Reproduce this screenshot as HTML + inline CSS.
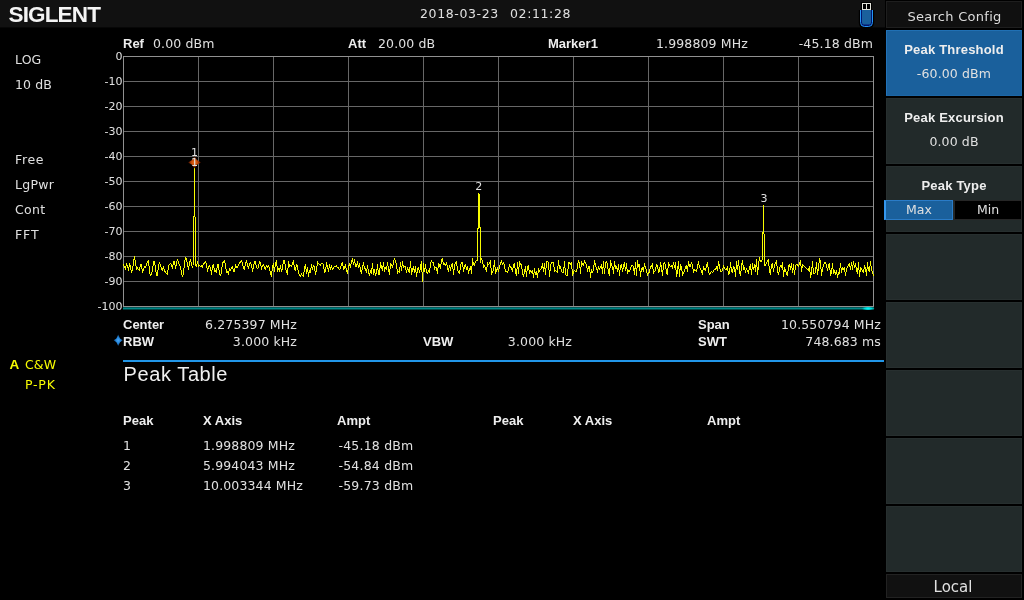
<!DOCTYPE html>
<html lang="en"><head><meta charset="utf-8"><title>SIGLENT Spectrum Analyzer - Peak Table</title>
<style>
html,body{margin:0;padding:0;background:#000;}
body{width:1024px;height:600px;position:relative;overflow:hidden;color:#e0e0e0;will-change:transform;
 font-family:"DejaVu Sans","Liberation Sans",sans-serif;font-size:12.5px;}
.t{position:absolute;white-space:nowrap;line-height:20px;height:20px;margin-top:-14px;}
.n{font-family:"DejaVu Sans","Liberation Sans",sans-serif;font-size:12.5px;font-weight:normal;letter-spacing:0.13px;}
.dt{letter-spacing:0.62px;}
.s{font-family:"DejaVu Sans","Liberation Sans",sans-serif;font-size:11px;}
.b{font-family:"Liberation Sans",sans-serif;font-size:13px;font-weight:bold;color:#eee;}
.y{color:#f8fc00;}
#hdr{position:absolute;left:0;top:0;width:885px;height:27px;background:#111;border-bottom:1px solid #070707;}
#logo{position:absolute;left:8.5px;top:1px;height:28px;line-height:28px;font-family:"Liberation Sans",sans-serif;
 font-weight:bold;font-size:22.5px;color:#f4f4f4;letter-spacing:-0.85px;}
#chart{position:absolute;left:0;top:0;}
#menu{position:absolute;left:886px;top:0;width:136px;height:600px;}
#menu .title{position:absolute;left:0;top:1px;width:134px;height:25px;border:1px solid #1e1e1e;background:#101010;
 text-align:center;line-height:29px;font-size:13px;letter-spacing:0.28px;text-indent:1px;color:#dcdcdc;}
#menu .k{position:absolute;left:0;width:136px;height:66px;background:#222a2a;box-sizing:border-box;border:1px solid #272f2f;text-align:center;}
#menu .k.sel{background:#1a609c;border:1px solid #1c66a6;border-left:1px solid #2272b8;border-top:1px solid #2070b4;}
#menu .k .l{position:absolute;left:-1px;width:136px;top:9px;letter-spacing:0.2px;line-height:20px;font-family:"Liberation Sans",sans-serif;font-weight:bold;font-size:13px;color:#eee;}
#menu .k .v{position:absolute;left:-1px;width:136px;top:33px;line-height:20px;font-size:12.5px;letter-spacing:0.13px;}
#menu .local{position:absolute;left:0;top:574px;width:134px;height:22px;border:1px solid #222;background:#111;text-align:center;line-height:24px;font-size:15px;color:#e0e0e0;text-indent:-2px;}
#max{position:absolute;left:-3px;top:33px;width:69px;height:20px;box-sizing:border-box;background:#1a609c;border:1px solid #2a7cc8;border-left:2px solid #3498f0;line-height:18px;font-size:12.5px;}
#min{position:absolute;left:67px;top:33px;width:68px;height:20px;box-sizing:border-box;background:#000;border:1px solid #262626;line-height:18px;font-size:12.5px;}
#ptitle{position:absolute;left:123.5px;letter-spacing:0.6px;top:361px;font-family:"Liberation Sans",sans-serif;font-size:20px;line-height:26px;color:#f0f0f0;}
table#pk{position:absolute;left:123px;top:410px;border-collapse:collapse;table-layout:fixed;width:740px;}
#pk th{font-family:"Liberation Sans",sans-serif;font-weight:bold;font-size:13px;text-align:left;padding:0;height:26px;line-height:22px;color:#eee;vertical-align:top;}
#pk td{padding:0;height:20px;line-height:20px;font-size:12.5px;letter-spacing:0.13px;}
#pk td.a{padding-left:1.5px;letter-spacing:0.2px;}
</style></head><body>
<div id="hdr"><div id="logo">SIGLENT</div></div>
<svg id="chart" width="1024" height="600" viewBox="0 0 1024 600" shape-rendering="crispEdges">
 <defs>
  <radialGradient id="mg" cx="50%" cy="50%" r="50%"><stop offset="0" stop-color="#f07018"/><stop offset="0.5" stop-color="#c04808"/><stop offset="1" stop-color="#300800"/></radialGradient>
  <radialGradient id="bg" cx="50%" cy="50%" r="50%"><stop offset="0" stop-color="#48a8f8"/><stop offset="0.5" stop-color="#2484d8"/><stop offset="1" stop-color="#0c3c6c"/></radialGradient>
  <radialGradient id="cg" cx="50%" cy="50%" r="50%"><stop offset="0" stop-color="#00ffff"/><stop offset="0.5" stop-color="#00e0e0" stop-opacity="0.9"/><stop offset="1" stop-color="#00a0a0" stop-opacity="0"/></radialGradient>
 </defs>
 <path d="M198.5 56V307M123 81.5H874M273.5 56V307M123 106.5H874M348.5 56V307M123 131.5H874M423.5 56V307M123 156.5H874M498.5 56V307M123 181.5H874M573.5 56V307M123 206.5H874M648.5 56V307M123 231.5H874M723.5 56V307M123 256.5H874M798.5 56V307M123 281.5H874" stroke="#676767" stroke-width="1" fill="none"/>
 <rect x="123.5" y="56.5" width="750" height="250" fill="none" stroke="#909090" stroke-width="1"/>
 <rect x="123" y="307" width="751" height="1" fill="#005858"/>
 <rect x="123" y="308" width="751" height="1" fill="#008888"/>
 <rect x="123" y="309" width="751" height="1" fill="#004444"/>
 <ellipse cx="868" cy="308.5" rx="7" ry="2" fill="url(#cg)" shape-rendering="auto"/>
 <path d="M123.5 264V266M124.5 266V268M125.5 266V270M126.5 263V266M127.5 265V268M128.5 267V271M129.5 263V267M130.5 265V270M131.5 270V273M132.5 266V271M133.5 259V266M134.5 256V260M135.5 260V266M136.5 266V270M137.5 267V269M138.5 269V270M139.5 267V271M140.5 264V267M141.5 264V269M142.5 269V273M143.5 268V271M144.5 266V268M145.5 266V268M146.5 263V266M147.5 261V263M148.5 260V266M149.5 266V274M150.5 274V276M151.5 272V275M152.5 266V272M153.5 261V266M154.5 261V265M155.5 265V272M156.5 272V276M157.5 270V276M158.5 264V270M159.5 262V264M160.5 264V267M161.5 267V270M162.5 268V271M163.5 266V269M164.5 269V272M165.5 271V273M166.5 273V274M167.5 270V275M168.5 265V270M169.5 264V265M170.5 263V264M171.5 264V267M172.5 265V269M173.5 261V265M174.5 261V265M175.5 265V269M176.5 261V266M177.5 259V261M178.5 261V264M179.5 264V266M180.5 266V270M181.5 270V275M182.5 275V277M183.5 268V275M184.5 260V268M185.5 257V260M186.5 258V262M187.5 262V267M188.5 266V270M189.5 261V266M190.5 259V262M191.5 262V266M192.5 266V268M193.5 216V265M194.5 168V217M195.5 217V266M196.5 264V267M197.5 261V264M198.5 264V267M199.5 265V266M200.5 266V267M201.5 265V267M202.5 265V268M203.5 263V265M204.5 262V264M205.5 261V263M206.5 263V268M207.5 268V272M208.5 266V269M209.5 265V267M210.5 267V271M211.5 270V275M212.5 265V270M213.5 264V268M214.5 268V272M215.5 270V272M216.5 268V273M217.5 264V268M218.5 264V270M219.5 270V275M220.5 274V276M221.5 267V274M222.5 262V267M223.5 261V263M224.5 260V263M225.5 263V269M226.5 269V273M227.5 271V273M228.5 271V275M229.5 268V271M230.5 269V271M231.5 267V269M232.5 266V269M233.5 269V272M234.5 268V272M235.5 264V268M236.5 266V268M237.5 266V268M238.5 264V266M239.5 262V264M240.5 261V263M241.5 260V262M242.5 262V266M243.5 266V269M244.5 266V270M245.5 262V266M246.5 260V263M247.5 263V267M248.5 266V269M249.5 263V266M250.5 262V264M251.5 264V268M252.5 268V272M253.5 264V269M254.5 261V264M255.5 261V265M256.5 265V268M257.5 268V269M258.5 264V268M259.5 261V264M260.5 262V266M261.5 266V270M262.5 265V267M263.5 264V266M264.5 266V269M265.5 267V270M266.5 265V267M267.5 266V268M268.5 265V267M269.5 267V271M270.5 271V275M271.5 271V277M272.5 265V271M273.5 263V268M274.5 267V272M275.5 262V267M276.5 260V266M277.5 266V272M278.5 268V270M279.5 268V272M280.5 265V269M281.5 269V272M282.5 264V270M283.5 260V264M284.5 260V264M285.5 264V270M286.5 270V273M287.5 268V275M288.5 261V268M289.5 264V267M290.5 265V266M291.5 265V267M292.5 262V265M293.5 260V265M294.5 265V270M295.5 267V271M296.5 264V267M297.5 265V270M298.5 270V274M299.5 274V276M300.5 275V277M301.5 273V275M302.5 275V276M303.5 272V277M304.5 266V272M305.5 264V269M306.5 269V274M307.5 267V272M308.5 272V277M309.5 270V273M310.5 268V273M311.5 264V268M312.5 267V270M313.5 265V267M314.5 266V271M315.5 271V275M316.5 266V272M317.5 261V266M318.5 263V264M319.5 264V265M320.5 264V266M321.5 263V264M322.5 263V264M323.5 264V269M324.5 269V273M325.5 267V272M326.5 262V267M327.5 265V269M328.5 268V272M329.5 264V268M330.5 267V270M331.5 265V268M332.5 268V270M333.5 267V269M334.5 266V267M335.5 266V267M336.5 265V267M337.5 267V268M338.5 267V269M339.5 269V270M340.5 266V269M341.5 263V266M342.5 262V266M343.5 266V270M344.5 266V269M345.5 264V268M346.5 268V272M347.5 270V274M348.5 265V270M349.5 263V266M350.5 264V268M351.5 260V264M352.5 258V262M353.5 262V265M354.5 259V263M355.5 263V267M356.5 264V267M357.5 261V265M358.5 265V268M359.5 263V267M360.5 267V272M361.5 270V274M362.5 265V270M363.5 262V266M364.5 266V269M365.5 268V271M366.5 269V273M367.5 265V269M368.5 269V274M369.5 273V276M370.5 270V273M371.5 268V274M372.5 263V269M373.5 269V275M374.5 269V273M375.5 273V276M376.5 269V274M377.5 264V270M378.5 270V275M379.5 268V275M380.5 262V268M381.5 265V269M382.5 266V271M383.5 262V267M384.5 267V272M385.5 267V269M386.5 266V270M387.5 262V266M388.5 266V272M389.5 269V275M390.5 263V269M391.5 264V266M392.5 265V268M393.5 260V265M394.5 258V260M395.5 260V263M396.5 263V269M397.5 269V274M398.5 271V272M399.5 267V273M400.5 262V267M401.5 266V271M402.5 261V266M403.5 265V268M404.5 266V267M405.5 266V270M406.5 270V273M407.5 267V270M408.5 269V272M409.5 267V273M410.5 261V268M411.5 268V275M412.5 268V272M413.5 266V270M414.5 269V273M415.5 266V272M416.5 272V277M417.5 268V273M418.5 267V270M419.5 270V273M420.5 264V270M421.5 261V272M422.5 272V282M423.5 263V272M424.5 268V272M425.5 264V269M426.5 269V273M427.5 272V274M428.5 270V272M429.5 268V273M430.5 262V268M431.5 260V262M432.5 262V263M433.5 262V266M434.5 266V270M435.5 267V268M436.5 267V271M437.5 268V274M438.5 263V268M439.5 264V267M440.5 264V269M441.5 259V264M442.5 258V262M443.5 262V265M444.5 263V265M445.5 264V266M446.5 262V265M447.5 265V270M448.5 268V272M449.5 265V268M450.5 267V271M451.5 264V267M452.5 263V269M453.5 269V275M454.5 264V270M455.5 262V264M456.5 261V266M457.5 266V271M458.5 271V273M459.5 270V274M460.5 264V270M461.5 262V264M462.5 262V267M463.5 267V272M464.5 265V269M465.5 264V267M466.5 267V270M467.5 266V270M468.5 270V274M469.5 268V271M470.5 266V270M471.5 266V274M472.5 258V266M473.5 262V265M474.5 263V266M475.5 261V263M476.5 260V261M477.5 228V261M478.5 193V229M479.5 194V228M480.5 227V263M481.5 258V260M482.5 260V264M483.5 264V268M484.5 265V267M485.5 267V270M486.5 267V272M487.5 262V267M488.5 264V265M489.5 262V264M490.5 260V268M491.5 268V275M492.5 271V273M493.5 265V271M494.5 260V267M495.5 267V274M496.5 269V272M497.5 267V270M498.5 269V272M499.5 265V269M500.5 262V265M501.5 260V263M502.5 263V265M503.5 262V264M504.5 264V269M505.5 269V272M506.5 271V272M507.5 271V273M508.5 267V271M509.5 264V267M510.5 266V268M511.5 267V270M512.5 268V272M513.5 264V268M514.5 263V268M515.5 268V274M516.5 269V276M517.5 262V269M518.5 267V274M519.5 261V267M520.5 263V265M521.5 264V269M522.5 269V275M523.5 274V277M524.5 269V274M525.5 266V272M526.5 271V277M527.5 266V271M528.5 265V270M529.5 270V274M530.5 270V272M531.5 271V273M532.5 270V274M533.5 273V278M534.5 268V273M535.5 272V275M536.5 271V275M537.5 273V278M538.5 268V273M539.5 270V272M540.5 269V270M541.5 266V269M542.5 263V268M543.5 267V272M544.5 263V269M545.5 268V275M546.5 261V268M547.5 261V262M548.5 262V270M549.5 270V277M550.5 264V271M551.5 262V264M552.5 262V263M553.5 262V267M554.5 267V272M555.5 270V271M556.5 271V272M557.5 266V273M558.5 260V266M559.5 265V269M560.5 266V269M561.5 269V272M562.5 272V273M563.5 267V273M564.5 261V268M565.5 268V275M566.5 275V276M567.5 269V276M568.5 262V269M569.5 262V264M570.5 263V265M571.5 262V269M572.5 269V276M573.5 271V274M574.5 270V271M575.5 271V272M576.5 269V272M577.5 263V269M578.5 260V263M579.5 262V268M580.5 267V274M581.5 261V267M582.5 263V265M583.5 263V266M584.5 260V263M585.5 262V264M586.5 264V268M587.5 268V272M588.5 266V269M589.5 266V272M590.5 272V278M591.5 269V273M592.5 271V273M593.5 265V271M594.5 260V265M595.5 263V267M596.5 267V270M597.5 269V273M598.5 266V269M599.5 268V270M600.5 266V268M601.5 264V269M602.5 267V274M603.5 261V268M604.5 268V274M605.5 262V268M606.5 261V263M607.5 263V269M608.5 269V274M609.5 268V276M610.5 260V268M611.5 263V266M612.5 266V270M613.5 267V274M614.5 261V267M615.5 265V269M616.5 266V269M617.5 268V272M618.5 264V270M619.5 270V276M620.5 265V270M621.5 264V268M622.5 268V272M623.5 264V269M624.5 262V267M625.5 267V271M626.5 263V269M627.5 269V274M628.5 270V272M629.5 270V272M630.5 267V270M631.5 265V267M632.5 265V266M633.5 266V271M634.5 268V275M635.5 262V269M636.5 268V276M637.5 260V268M638.5 264V267M639.5 264V271M640.5 271V277M641.5 268V272M642.5 267V270M643.5 267V272M644.5 263V267M645.5 266V269M646.5 269V273M647.5 273V276M648.5 272V274M649.5 269V273M650.5 266V269M651.5 265V267M652.5 263V269M653.5 269V274M654.5 271V272M655.5 267V271M656.5 264V267M657.5 265V269M658.5 269V273M659.5 267V272M660.5 262V267M661.5 265V272M662.5 270V276M663.5 263V270M664.5 262V264M665.5 264V269M666.5 269V274M667.5 268V275M668.5 262V268M669.5 264V266M670.5 266V267M671.5 265V267M672.5 265V269M673.5 262V265M674.5 265V268M675.5 262V270M676.5 270V277M677.5 266V274M678.5 261V269M679.5 269V277M680.5 264V270M681.5 266V271M682.5 271V276M683.5 272V274M684.5 269V272M685.5 266V269M686.5 265V269M687.5 266V272M688.5 261V266M689.5 264V267M690.5 264V267M691.5 262V264M692.5 264V269M693.5 269V273M694.5 269V271M695.5 270V271M696.5 269V272M697.5 264V269M698.5 261V265M699.5 265V268M700.5 268V270M701.5 270V273M702.5 270V275M703.5 266V270M704.5 268V270M705.5 268V271M706.5 264V268M707.5 262V267M708.5 267V273M709.5 273V275M710.5 272V274M711.5 271V272M712.5 272V273M713.5 270V272M714.5 269V270M715.5 268V270M716.5 266V269M717.5 266V271M718.5 261V266M719.5 264V269M720.5 269V272M721.5 271V272M722.5 268V271M723.5 265V268M724.5 267V269M725.5 269V270M726.5 268V270M727.5 266V271M728.5 271V275M729.5 268V274M730.5 262V268M731.5 267V272M732.5 269V273M733.5 266V269M734.5 267V272M735.5 269V277M736.5 261V269M737.5 265V270M738.5 260V266M739.5 266V274M740.5 271V276M741.5 263V271M742.5 260V265M743.5 265V270M744.5 267V270M745.5 270V273M746.5 268V270M747.5 270V272M748.5 270V274M749.5 266V270M750.5 264V270M751.5 269V275M752.5 263V269M753.5 267V270M754.5 264V268M755.5 265V272M756.5 259V267M757.5 267V275M758.5 261V270M759.5 257V261M760.5 260V262M761.5 260V262M762.5 232V260M763.5 205V234M764.5 234V266M765.5 264V266M766.5 262V264M767.5 260V262M768.5 259V266M769.5 266V273M770.5 269V275M771.5 264V269M772.5 263V268M773.5 268V272M774.5 264V268M775.5 262V264M776.5 260V266M777.5 266V273M778.5 272V275M779.5 267V272M780.5 265V267M781.5 265V268M782.5 262V270M783.5 270V277M784.5 267V272M785.5 269V272M786.5 272V275M787.5 271V276M788.5 265V271M789.5 264V267M790.5 266V270M791.5 263V268M792.5 268V273M793.5 264V270M794.5 270V275M795.5 265V270M796.5 264V265M797.5 264V266M798.5 265V267M799.5 262V265M800.5 260V266M801.5 266V272M802.5 264V268M803.5 265V266M804.5 266V267M805.5 267V268M806.5 268V269M807.5 269V270M808.5 268V271M809.5 266V272M810.5 272V278M811.5 267V275M812.5 261V268M813.5 268V274M814.5 273V274M815.5 267V273M816.5 262V269M817.5 269V275M818.5 263V271M819.5 258V263M820.5 260V269M821.5 269V276M822.5 267V272M823.5 264V267M824.5 262V264M825.5 262V264M826.5 264V268M827.5 268V271M828.5 264V268M829.5 263V270M830.5 270V276M831.5 268V274M832.5 263V269M833.5 269V274M834.5 270V273M835.5 272V275M836.5 270V274M837.5 274V278M838.5 272V275M839.5 268V274M840.5 263V268M841.5 268V273M842.5 267V270M843.5 268V270M844.5 267V272M845.5 272V276M846.5 268V272M847.5 266V268M848.5 264V266M849.5 263V267M850.5 266V270M851.5 262V266M852.5 265V270M853.5 261V265M854.5 265V268M855.5 263V267M856.5 267V272M857.5 268V274M858.5 262V270M859.5 270V277M860.5 267V272M861.5 268V270M862.5 270V272M863.5 269V273M864.5 265V269M865.5 267V272M866.5 269V276M867.5 262V269M868.5 267V271M869.5 266V272M870.5 261V266M871.5 266V271M872.5 271V274M873.5 274V276" stroke="#f8fc00" stroke-width="1" fill="none"/>
 <path d="M194.5 156.3 L197 160 L201 162.4 L197 164.8 L194.5 168.5 L192 164.8 L188 162.4 L192 160Z" fill="url(#mg)" shape-rendering="auto"/>
 <rect x="123" y="360" width="761" height="2" fill="#2196e8"/>
 <path d="M118.2 334.6 L120 338.4 L122.8 340.3 L120 342.2 L118.2 346 L116.4 342.2 L113.6 340.3 L116.4 338.4Z" fill="url(#bg)" shape-rendering="auto"/>
 <!-- usb icon -->
 <g shape-rendering="auto">
  <path d="M860.5 10 V22.5 Q860.5 26.5 864.5 26.5 H868.5 Q872.5 26.5 872.5 22.5 V10" fill="#000" stroke="#000" stroke-width="3.4"/>
  <rect x="861" y="2" width="11" height="9" fill="#000"/>
  <path d="M860.5 10 V22.5 Q860.5 26.5 864.5 26.5 H868.5 Q872.5 26.5 872.5 22.5 V10" fill="#001470" stroke="#2496f4" stroke-width="1"/>
  <path d="M862 10 V22 Q862 24.6 864.6 24.6 H868.4 Q871 24.6 871 22 V10 Z" fill="#1a609c"/>
  <rect x="862" y="3" width="9" height="7" fill="#e4e4dc"/>
  <rect x="863" y="4" width="3" height="5" fill="#000"/>
  <rect x="867" y="4" width="3" height="5" fill="#000"/>
 </g>
</svg>
<div class="t n dt" style="top:18px;left:420px;">2018-03-23</div>
<div class="t n dt" style="top:18px;left:510px;">02:11:28</div>
<div class="t n" style="top:64px;left:15px;letter-spacing:0.13px;">LOG</div>
<div class="t n" style="top:89px;left:15px;letter-spacing:0.13px;">10 dB</div>
<div class="t n" style="top:164px;left:15px;letter-spacing:0.65px;">Free</div>
<div class="t n" style="top:189px;left:15px;letter-spacing:0.3px;">LgPwr</div>
<div class="t n" style="top:214px;left:15px;letter-spacing:0.3px;">Cont</div>
<div class="t n" style="top:239px;left:15px;letter-spacing:0.9px;">FFT</div>
<div class="t b y" style="top:369px;left:9.5px;font-size:13.5px;">A</div>
<div class="t n y" style="top:369px;left:25px;">C&amp;W</div>
<div class="t n y" style="top:389px;left:25px;letter-spacing:0.8px;">P-PK</div>
<div class="t b" style="top:48px;left:123px;">Ref</div>
<div class="t n" style="top:48px;left:153px;">0.00 dBm</div>
<div class="t b" style="top:48px;left:348px;">Att</div>
<div class="t n" style="top:48px;left:378px;">20.00 dB</div>
<div class="t b" style="top:48px;left:548px;">Marker1</div>
<div class="t n" style="top:48px;left:656px;">1.998809 MHz</div>
<div class="t n" style="top:48px;right:151px;">-45.18 dBm</div>
<div class="t s" style="top:61px;right:901.6px;">0</div>
<div class="t s" style="top:86px;right:901.6px;">-10</div>
<div class="t s" style="top:111px;right:901.6px;">-20</div>
<div class="t s" style="top:136px;right:901.6px;">-30</div>
<div class="t s" style="top:161px;right:901.6px;">-40</div>
<div class="t s" style="top:186px;right:901.6px;">-50</div>
<div class="t s" style="top:211px;right:901.6px;">-60</div>
<div class="t s" style="top:236px;right:901.6px;">-70</div>
<div class="t s" style="top:261px;right:901.6px;">-80</div>
<div class="t s" style="top:286px;right:901.6px;">-90</div>
<div class="t s" style="top:311px;right:901.6px;">-100</div>
<div class="t b" style="top:329px;left:123px;">Center</div>
<div class="t n" style="top:329px;right:727px;">6.275397 MHz</div>
<div class="t b" style="top:346px;left:123px;">RBW</div>
<div class="t n" style="top:346px;right:727px;">3.000 kHz</div>
<div class="t b" style="top:346px;left:423px;">VBW</div>
<div class="t n" style="top:346px;right:452px;">3.000 kHz</div>
<div class="t b" style="top:329px;left:698px;">Span</div>
<div class="t n" style="top:329px;right:143px;">10.550794 MHz</div>
<div class="t b" style="top:346px;left:698px;">SWT</div>
<div class="t n" style="top:346px;right:143px;">748.683 ms</div>
<div class="t s" style="top:157px;left:44.5px;width:300px;text-align:center;">1</div>
<div class="t s" style="top:167px;left:44.5px;width:300px;text-align:center;">1</div>
<div class="t s" style="top:191px;left:328.8px;width:300px;text-align:center;">2</div>
<div class="t s" style="top:203px;left:614px;width:300px;text-align:center;">3</div>
<div id="ptitle">Peak Table</div>
<table id="pk">
<tr><th style="width:80px">Peak</th><th style="width:134px">X Axis</th><th style="width:156px">Ampt</th><th style="width:80px">Peak</th><th style="width:134px">X Axis</th><th>Ampt</th></tr>
<tr><td>1</td><td>1.998809 MHz</td><td class="a">-45.18 dBm</td><td></td><td></td><td></td></tr>
<tr><td>2</td><td>5.994043 MHz</td><td class="a">-54.84 dBm</td><td></td><td></td><td></td></tr>
<tr><td>3</td><td>10.003344 MHz</td><td class="a">-59.73 dBm</td><td></td><td></td><td></td></tr>
</table>
<div id="menu">
 <div class="title">Search Config</div>
 <div class="k sel" style="top:30px"><div class="l">Peak Threshold</div><div class="v">-60.00 dBm</div></div>
 <div class="k" style="top:98px"><div class="l">Peak Excursion</div><div class="v">0.00 dB</div></div>
 <div class="k" style="top:166px"><div class="l">Peak Type</div><div id="max">Max</div><div id="min">Min</div></div>
 <div class="k" style="top:234px"></div>
 <div class="k" style="top:302px"></div>
 <div class="k" style="top:370px"></div>
 <div class="k" style="top:438px"></div>
 <div class="k" style="top:506px"></div>
 <div class="local">Local</div>
</div>
</body></html>
